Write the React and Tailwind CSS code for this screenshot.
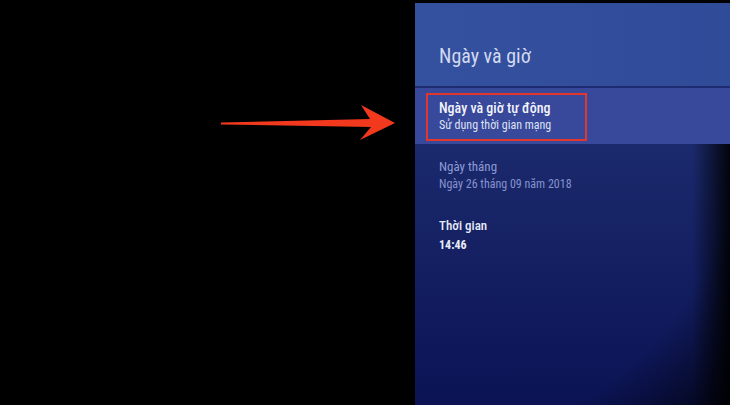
const font = { fontFamily: '"Roboto Condensed", Roboto, "Noto Sans", sans-serif' }

const Arrow = () => (
  <svg width="180" height="40" viewBox="0 0 180 40">
    <path
      d="M1 18.5 L150 15 L141 1 L175 19 L140 36 L151 23 L1 20.5 Z"
      fill="#f2391d"
    />
  </svg>
)

const App = () => {
  return (
    <div className="flex h-[405px] w-[730px] overflow-hidden bg-black" style={font}>
      <div className="w-[415px] shrink-0 pl-[220px] pt-[104px]">
        <Arrow />
      </div>

      <div className="flex flex-1 flex-col pt-[3px]">
        <div className="h-[83px] shrink-0 bg-[linear-gradient(to_right,#34519f,#304b98)] pl-[24px] pt-[41px]">
          <h1 className="font-stretch-condensed text-[20px] leading-[24px] text-[#d3d9f0]">Ngày và giờ</h1>
        </div>
        <div className="h-[2px] shrink-0 bg-[#1d2c70]" />

        <div className="h-[56px] shrink-0 bg-[#38489a] pl-[11px] pt-[5px]">
          <div className="h-[48px] w-[161px] border-2 border-[#e3372c] pl-[11px] pt-[5px]">
            <p className="font-stretch-condensed text-[14px] leading-[16px] font-medium text-[#f2f3fb]">Ngày và giờ tự động</p>
            <p className="mt-[2px] font-stretch-condensed text-[12px] leading-[14px] text-[#dde2f4]">Sử dụng thời gian mạng</p>
          </div>
        </div>

        <div className="flex-1 bg-[linear-gradient(to_right,transparent_88%,rgba(0,0,0,0.9)),radial-gradient(ellipse_140%_160%_at_0%_0%,transparent_72%,rgba(0,0,0,0.9)_100%),linear-gradient(to_bottom,#1b2a6d,#0b1354)] pl-[24px] pt-[15px]">
          <p className="font-stretch-condensed text-[13px] leading-[16px] text-[#8e9ad5]">Ngày tháng</p>
          <p className="mt-[2px] font-stretch-condensed text-[12px] leading-[14px] text-[#8692cd]">Ngày 26 tháng 09 năm 2018</p>
          <p className="mt-[27px] font-stretch-condensed text-[13px] leading-[16px] font-medium text-[#e8ebf7]">Thời gian</p>
          <p className="mt-[4px] font-stretch-condensed text-[12px] leading-[14px] font-bold text-[#e8ebf7]">14:46</p>
        </div>
      </div>
    </div>
  )
}

export default App
